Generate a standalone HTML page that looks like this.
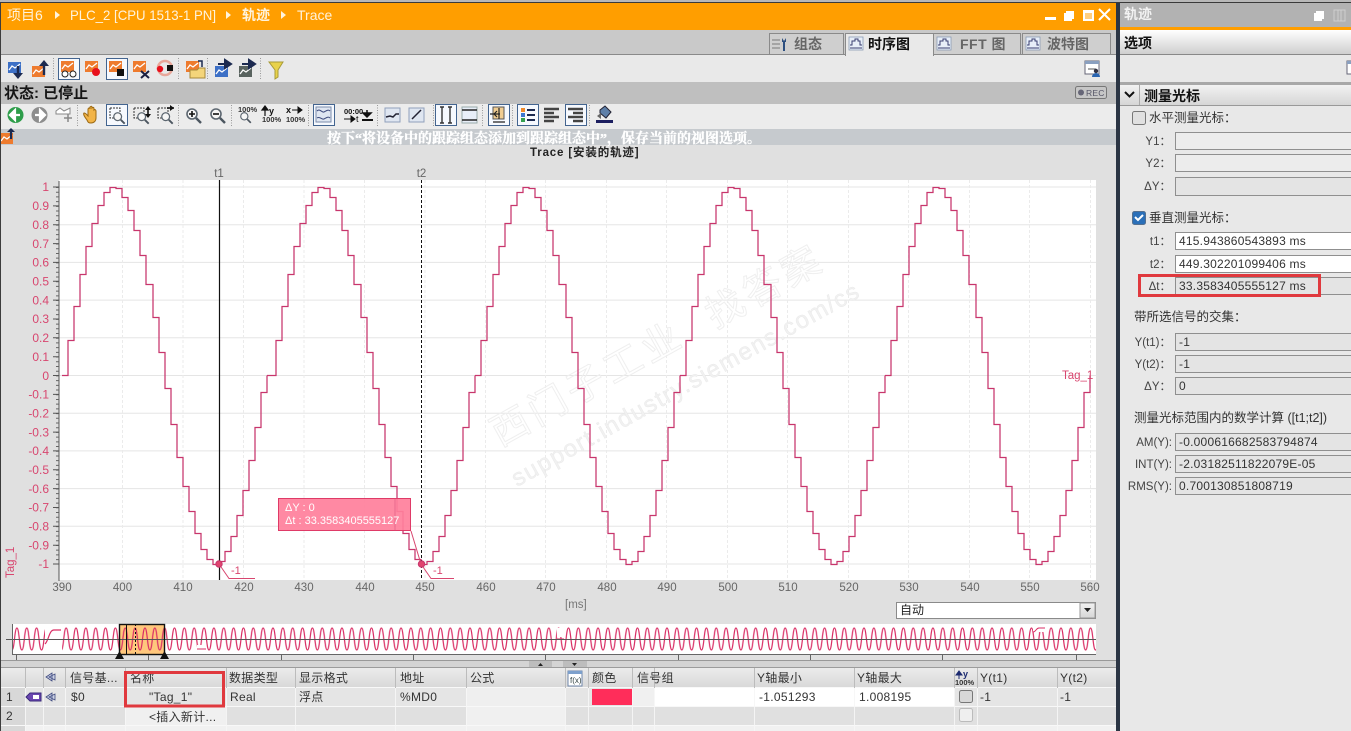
<!DOCTYPE html>
<html><head><meta charset="utf-8"><title>Trace</title>
<style>
html,body{margin:0;padding:0;width:1351px;height:731px;overflow:hidden;background:#e8e8e8}
svg{display:block;font-family:"Liberation Sans","Noto Sans CJK SC",sans-serif}
.y text{font-size:12px;fill:#d8466f;text-anchor:end}
.x text{font-size:11.5px;fill:#666;text-anchor:middle}
.tb text{font-size:12px;fill:#333;letter-spacing:.3px}
.f{fill:#e4e4e4;stroke:#8f8f8f}
.w{fill:#fff;stroke:#8f8f8f}
.lb{font-size:11.5px;fill:#444;text-anchor:end}
.v{font-size:12px;fill:#333;letter-spacing:.22px}
.cn{font-size:12.5px;fill:#333}
.sep{stroke:#9a9a9a;stroke-dasharray:1 1.5}
.sel{fill:#f6f9fe;stroke:#43648f}
</style></head><body>
<svg width="1351" height="731" viewBox="0 0 1351 731" xmlns="http://www.w3.org/2000/svg">
<defs>
<linearGradient id="g1" x1="0" y1="0" x2="0" y2="1"><stop offset="0" stop-color="#fff"/><stop offset="1" stop-color="#cfcfcf"/></linearGradient>
<linearGradient id="g2" x1="0" y1="0" x2="0" y2="1"><stop offset="0" stop-color="#f2f2f2"/><stop offset="1" stop-color="#d6d6d6"/></linearGradient>
<linearGradient id="g3" x1="0" y1="0" x2="0" y2="1"><stop offset="0" stop-color="#ececec"/><stop offset="1" stop-color="#d8d8d8"/></linearGradient>
<path id="w" fill="none" stroke="#c8356c" stroke-width="1.25" d="M0 0H6V-35H12V-69H18V-101H24V-129H30V-152H36V-170H42V-183H48V-188H54V-187H60V-178H66V-165H72V-145H78V-120H84V-91H91V-58H97V-23H103V13H109V49H115V82H121V111H127V136H133V158H139V174H145V184H151V189H157V186H163V176H169V161H175V140H181V115H187V85H193V52H199V17H205V0"/>
<g id="or"><rect width="13" height="11" fill="#ee7b2e"/><path d="M1 8L4 4L7 6L12 2" fill="none" stroke="#fff" stroke-width="1.3"/></g>
<g id="bl"><rect width="13" height="11" fill="#3d70c6"/><path d="M1 8L4 4L7 6L12 2" fill="none" stroke="#fff" stroke-width="1.3"/></g>
<g id="gy"><rect width="13" height="11" fill="#59635f"/><path d="M1 8L4 4L7 6L12 2" fill="none" stroke="#fff" stroke-width="1.3"/></g>
<g id="mag"><circle cx="6" cy="6" r="5" fill="#f6f6f6" stroke="#5c6670" stroke-width="1.6"/><path d="M10 10L15 15" stroke="#4c5660" stroke-width="2.4"/></g>
<g id="tr"><rect width="14" height="13" fill="#e7eef8" stroke="#8a9bb4" stroke-width=".8"/><path d="M1 8H3V4H6V2H9V4H11V8H13M1 11H13" fill="none" stroke="#3a3f70" stroke-width="1"/></g>
<pattern id="ov" patternUnits="userSpaceOnUse" x="12" y="624" width="9.85" height="30"><path d="M0 26C2.5 26 2.5 4 4.9 4S7.3 26 9.85 26" fill="none" stroke="#d92d64" stroke-width="1.2"/></pattern>
</defs>

<rect width="1351" height="731" fill="#e8e8e8"/>
<rect width="1351" height="2" fill="#b8b8b8"/><rect y="2" width="1351" height="1" fill="#3a3a3a"/>
<rect x="1" y="3" width="1115" height="27" fill="#ff9e00"/>
<rect x="1" y="30" width="1115" height="24" fill="#c9c9c9"/><rect x="1" y="54" width="1115" height="1" fill="#8a8a8a"/>
<rect x="1" y="55" width="1115" height="27" fill="#e9e9e9"/>
<rect x="1" y="82" width="1115" height="22" fill="#bfbfbf"/>
<rect x="1" y="104" width="1115" height="25" fill="#ececec"/>
<rect x="1" y="129" width="1115" height="16" fill="#c6cace"/>
<rect x="1" y="145" width="1115" height="516" fill="#e0e0e0"/>

<!-- title bar -->
<g fill="#fff3dc" font-size="14">
<text x="7" y="20">项目6</text>
<text x="70" y="20" textLength="146" lengthAdjust="spacingAndGlyphs">PLC_2 [CPU 1513-1 PN]</text>
<text x="242" y="20" font-weight="bold">轨迹</text>
<text x="297" y="20">Trace</text>
<path d="M55 11l5 4-5 4zM226 11l5 4-5 4zM281 11l5 4-5 4z"/>
</g>
<g fill="#fff">
<rect x="1045" y="17" width="11" height="3"/>
<path d="M1066 11h8v8h-2v2h-8v-8h2z"/>
<rect x="1083" y="10" width="11" height="11"/><rect x="1085" y="13" width="7" height="6" fill="#ffcf80"/>
<path d="M1099 9l11 11M1110 9l-11 11" stroke="#fff" stroke-width="2"/>
</g>

<!-- tabs -->
<g stroke="#8a8a8a" fill="#cfcfcf">
<rect x="769.5" y="33.5" width="74" height="21"/>
<rect x="933.5" y="33.5" width="87" height="21"/>
<rect x="1022.5" y="33.5" width="88" height="21"/>
</g>
<rect x="845.5" y="33.5" width="88" height="22" fill="#e9e9e9" stroke="#8a8a8a"/>
<rect x="846" y="54" width="87" height="2" fill="#e9e9e9"/>
<path d="M772 40h8M772 44h8M772 48h8" stroke="#8a8a8a" stroke-width="1.3"/><path d="M782 38l2 3 2-3v4h-1v9h-2v-9h-1z" fill="#2d4f80"/>
<use href="#tr" x="849" y="37"/><use href="#tr" x="937" y="37"/><use href="#tr" x="1026" y="37"/>
<g font-size="14" font-weight="bold" fill="#666">
<text x="794" y="49">组态</text>
<text x="960" y="49" letter-spacing=".5">FFT 图</text>
<text x="1047" y="49">波特图</text>
<text x="868" y="49" fill="#111">时序图</text>
</g>

<!-- toolbar 1 -->
<rect class="sel" x="58.5" y="58.5" width="21" height="21"/>
<rect class="sel" x="106.5" y="58.5" width="21" height="21"/>
<g class="sep"><path d="M53.5 58v22M178.5 58v22M207.5 58v22M260.5 58v22"/></g>
<use href="#bl" x="8" y="62"/><path d="M18 66v11" stroke="#1c2a50" stroke-width="2.4"/><path d="M13 73h10l-5 6z" fill="#1c2a50"/>
<use href="#or" x="32" y="66"/><path d="M44 63v12" stroke="#1c2a50" stroke-width="2.4"/><path d="M39 66h10l-5-6z" fill="#1c2a50"/>
<use href="#or" x="61" y="61"/><circle cx="65" cy="74" r="3" fill="#fff" stroke="#222"/><circle cx="73" cy="74" r="3" fill="#fff" stroke="#222"/>
<use href="#or" x="85" y="61"/><circle cx="96" cy="72" r="4" fill="#e8101c"/>
<use href="#or" x="109" y="61"/><rect x="117" y="69" width="7" height="7" fill="#111"/>
<use href="#or" x="133" y="61"/><path d="M141 71l8 7M149 71l-8 7" stroke="#1a1f40" stroke-width="2"/>
<circle cx="165" cy="68" r="7" fill="none" stroke="#e8a79a" stroke-width="2.5"/><circle cx="160" cy="69" r="3.2" fill="#e8101c"/><rect x="167" y="65" width="6" height="6" fill="#111"/>
<use href="#or" x="186" y="61"/><path d="M190 70h7l2-2h6v10h-15z" fill="#f4d57a" stroke="#a8893a"/><path d="M198 61h4v6" fill="none" stroke="#1c2a50" stroke-width="1.5"/>
<use href="#bl" x="215" y="66"/><path d="M218 64h10M225 60l6 4-6 4z" stroke="#1c2a50" stroke-width="2" fill="#1c2a50"/>
<use href="#gy" x="239" y="66"/><path d="M242 64h10M249 60l6 4-6 4z" stroke="#1c2a50" stroke-width="2" fill="#1c2a50"/>
<path d="M269 62h14l-5 8v7l-3 2v-9z" fill="#e8d24a" stroke="#a89b38"/>
<g transform="translate(1085,61)"><rect width="14" height="13" fill="#fff" stroke="#667"/><rect x="0" y="0" width="14" height="3" fill="#8aa0c0"/><path d="M3 8h8" stroke="#555"/><circle cx="11" cy="10" r="2.2" fill="#334"/><path d="M7 16a4 4 0 0 1 8 0z" fill="#2a64b0"/></g>

<!-- status bar -->
<text x="4" y="98" font-size="15" font-weight="bold" fill="#151515">状态: 已停止</text>
<rect x="1075.5" y="86.5" width="31" height="12" rx="2" fill="#c6c6c6" stroke="#777"/><circle cx="1081" cy="92.5" r="3" fill="#667"/><text x="1086" y="96" font-size="8.5" fill="#556" letter-spacing=".2">REC</text>

<!-- toolbar 2 -->
<rect class="sel" x="106.5" y="104.5" width="21" height="21"/>
<rect class="sel" x="313.5" y="104.5" width="21" height="21"/>
<rect class="sel" x="435.5" y="104.5" width="21" height="21"/>
<rect class="sel" x="488.5" y="104.5" width="21" height="21"/>
<rect class="sel" x="517.5" y="104.5" width="21" height="21"/>
<rect class="sel" x="565.5" y="104.5" width="21" height="21"/>
<g class="sep"><path d="M77.5 105v22M178.5 105v22M231.5 105v22M308.5 105v22M377.5 105v22M433.5 105v22M482.5 105v22M512.5 105v22M589.5 105v22"/></g>
<circle cx="15.5" cy="115" r="8" fill="#2e9d4a"/><path d="M20 115h-6M15 110l-5 5 5 5z" stroke="#fff" stroke-width="2.2" fill="#fff"/>
<circle cx="39.5" cy="115" r="8" fill="#8d8d8d"/><path d="M35 115h6M40 110l5 5-5 5z" stroke="#fff" stroke-width="2.2" fill="#fff"/>
<path d="M56 111l4-3 4 3 6-3v6H56z" fill="#fff" stroke="#888"/><path d="M68 114v8M64 118h8" stroke="#888" stroke-width="1.5"/>
<path d="M87 120c-3-4-4-6-3-7 2 0 3 2 4 3v-7c1-2 2-1 2 0v-2c1-1 2-1 2 0v1c1-1 2-1 2 1v1c1-1 2 0 2 1v7c0 3-2 5-5 5s-3-1-4-3z" fill="#f2b447" stroke="#9c6a14"/>
<path d="M110 108h10v8M110 108v10h5" fill="none" stroke="#333" stroke-dasharray="2 1"/><use href="#mag" transform="translate(113,112) scale(.78)"/>
<path d="M134 108h10v9M134 108v10h5" fill="none" stroke="#333" stroke-dasharray="2 1"/><use href="#mag" transform="translate(137,112) scale(.78)"/><path d="M148 107v10" stroke="#111" stroke-width="1.6"/><path d="M145 110l3-4 3 4zM145 114l3 4 3-4z" fill="#111"/>
<path d="M158 108h10v9M158 108v10h5" fill="none" stroke="#333" stroke-dasharray="2 1"/><use href="#mag" transform="translate(161,112) scale(.78)"/><path d="M167 108h7" stroke="#111" stroke-width="1.6"/><path d="M170 105l4 3-4 3z" fill="#111"/>
<use href="#mag" x="186" y="108"/><path d="M189 114h6M192 111v6" stroke="#111" stroke-width="1.6"/>
<use href="#mag" x="210" y="108"/><path d="M213 114h6" stroke="#111" stroke-width="1.6"/>
<text x="238" y="112" font-size="7.5" font-weight="bold" fill="#333">100%</text><use href="#mag" transform="translate(240,112) scale(.72)"/>
<path d="M265 107v9M262 110l3-4 3 4z" fill="#111" stroke="#111" stroke-width="1.2"/><text x="269" y="114" font-size="9" font-weight="bold" fill="#111">y</text><text x="262" y="122" font-size="7.5" font-weight="bold" fill="#333">100%</text>
<text x="286" y="113" font-size="9" font-weight="bold" fill="#111">x</text><path d="M292 110h9M298 107l4 3-4 3z" fill="#111" stroke="#111"/><text x="286" y="122" font-size="7.5" font-weight="bold" fill="#333">100%</text>
<rect x="316" y="107" width="15" height="15" fill="#dfe6f1" stroke="#7b8cab"/><path d="M317 111c3-3 5 2 7 1s4-3 6-1M317 118c3-2 5 2 7 1s4-3 6-1" fill="none" stroke="#3d4a7c"/>
<text x="344" y="114" font-size="7.5" font-weight="bold" fill="#111">00:00</text><path d="M344 119h9M351 116l4 3-4 3z" fill="#111" stroke="#111"/><text x="356" y="122" font-size="9" fill="#111">t</text>
<path d="M367 110v5M363 113l4 4 4-4z" fill="#111" stroke="#111" stroke-width="1.5"/><path d="M362 120h11" stroke="#111" stroke-width="2"/>
<rect x="385" y="108" width="15" height="14" fill="#dfe6f1" stroke="#90a0bb"/><path d="M386 117l4-1 3 1 3-3 3 0" fill="none" stroke="#223" stroke-width="1.5"/>
<rect x="409" y="108" width="15" height="14" fill="#dfe6f1" stroke="#90a0bb"/><path d="M412 119l9-9" stroke="#223" stroke-width="1.5"/>
<path d="M440 107h4M442 107v16M440 123h4M448 107h4M450 107v16M448 123h4" stroke="#333" fill="none" stroke-width="1.4"/>
<rect x="462" y="107" width="15" height="16" fill="#e8eef8" stroke="#9aa"/><path d="M462 110h15M462 120h15" stroke="#222" stroke-width="1.5"/>
<rect x="493" y="107" width="11" height="12" fill="#f1cd91" stroke="#555"/><path d="M490 114h10M497 111l-3 3 3 3M499 108v11M493 122h12" stroke="#222" stroke-width="1.2" fill="none"/>
<g><rect x="521" y="108" width="4" height="4" fill="#ef8a2b"/><rect x="521" y="113" width="4" height="4" fill="#3d78d0"/><rect x="521" y="118" width="4" height="4" fill="#35a050"/><path d="M527 110h8M527 115h8M527 120h8" stroke="#1c2a50" stroke-width="2"/></g>
<path d="M544 109h15M544 113h10M544 117h15M544 121h10" stroke="#444" stroke-width="2.4"/>
<path d="M568 109h15M573 113h10M568 117h15M573 121h10" stroke="#444" stroke-width="2.4"/>
<path d="M600 110l5-4 6 6-5 6-6-5z" fill="#5e7fa8" stroke="#223"/><path d="M597 116l4-3v6z" fill="#666"/><rect x="596" y="120" width="17" height="3" fill="#1c1f60"/>

<!-- message bar -->
<use href="#or" x="0" y="133"/><path d="M11 129v10" stroke="#1c2a50" stroke-width="2.2"/><path d="M7 132h8l-4-4z" fill="#1c2a50"/>
<text x="327" y="143" font-size="14" font-weight="bold" fill="#fff" stroke="#fff" stroke-width=".35" style="font-family:'Liberation Serif','Noto Serif CJK SC',serif">按下“将设备中的跟踪组态添加到跟踪组态中”，保存当前的视图选项。</text>
<text x="530" y="156" font-size="11.5" font-weight="bold" fill="#222" letter-spacing=".85">Trace [安装的轨迹]</text>

<!-- chart -->
<rect x="59" y="180" width="1037" height="400" fill="#fff"/>
<path d="M59 187H1096M59 224.7H1096M59 262.4H1096M59 300.1H1096M59 337.8H1096M59 375.5H1096M59 413.2H1096M59 450.9H1096M59 488.6H1096M59 526.3H1096M59 564H1096" stroke="#e5e5e5" fill="none"/>
<path d="M122.5 180V580M183 180V580M243.5 180V580M304 180V580M364.5 180V580M425 180V580M485.5 180V580M545.5 180V580M606.5 180V580M666.5 180V580M727.5 180V580M787.5 180V580M848.5 180V580M908.5 180V580M969.5 180V580M1029.5 180V580M1090.5 180V580" stroke="#ebebeb" stroke-dasharray="3 2" fill="none"/>

<g fill="none" stroke="#efefef" stroke-width="1">
<text transform="translate(500,447) rotate(-29)" font-size="38" letter-spacing="5">西门子工业</text>
<text transform="translate(715,329) rotate(-29)" font-size="38" letter-spacing="5">找答案</text>
</g>
<text transform="translate(517,487) rotate(-29)" font-size="24" fill="#f1f1f1" stroke="#e9e9e9" stroke-width=".4" textLength="393">support.industry.siemens.com/cs</text>

<use href="#w" x="62" y="375.5"/><path d="M267 375.5H270" stroke="#c8356c" stroke-width="1.25"/>
<use href="#w" x="270" y="375.5"/><use href="#w" x="475" y="375.5"/><use href="#w" x="680" y="375.5"/><use href="#w" x="885" y="375.5"/>

<path d="M59 181V581" stroke="#555" stroke-width="1"/>
<path d="M57.5 187V564" stroke="#666" stroke-width="3" stroke-dasharray="1 3.71"/>
<path d="M53 187h6M53 205.9h6M53 224.7h6M53 243.6h6M53 262.4h6M53 281.3h6M53 300.1h6M53 319h6M53 337.8h6M53 356.7h6M53 375.5h6M53 394.4h6M53 413.2h6M53 432.1h6M53 450.9h6M53 469.8h6M53 488.6h6M53 507.5h6M53 526.3h6M53 545.2h6M53 564h6" stroke="#555"/>
<g class="y">
<text x="49" y="191">1</text><text x="49" y="210">0.9</text><text x="49" y="229">0.8</text><text x="49" y="248">0.7</text><text x="49" y="266.5">0.6</text><text x="49" y="285.5">0.5</text><text x="49" y="304.5">0.4</text><text x="49" y="323">0.3</text><text x="49" y="342">0.2</text><text x="49" y="361">0.1</text><text x="49" y="380">0</text><text x="49" y="398.5">-0.1</text><text x="49" y="417.5">-0.2</text><text x="49" y="436.5">-0.3</text><text x="49" y="455">-0.4</text><text x="49" y="474">-0.5</text><text x="49" y="493">-0.6</text><text x="49" y="511.5">-0.7</text><text x="49" y="530.5">-0.8</text><text x="49" y="549.5">-0.9</text><text x="49" y="568">-1</text>
</g>
<text transform="translate(14,578) rotate(-90)" font-size="11.5" fill="#d8466f">Tag_1</text>
<text x="1062" y="379" font-size="11.5" fill="#d8466f">Tag_1</text>
<g class="x">
<text x="62" y="591">390</text><text x="122.5" y="591">400</text><text x="183" y="591">410</text><text x="244" y="591">420</text><text x="304" y="591">430</text><text x="365" y="591">440</text><text x="425" y="591">450</text><text x="486" y="591">460</text><text x="546" y="591">470</text><text x="607" y="591">480</text><text x="667" y="591">490</text><text x="728" y="591">500</text><text x="788" y="591">510</text><text x="849" y="591">520</text><text x="909" y="591">530</text><text x="970" y="591">540</text><text x="1030" y="591">550</text><text x="1090" y="591">560</text>
</g>
<text x="565" y="608" font-size="11.5" fill="#777">[ms]</text>

<path d="M219.5 180V580" stroke="#111" stroke-width="1.2"/>
<path d="M421.5 180V580" stroke="#111" stroke-dasharray="3 2"/>
<text x="219" y="177" font-size="11.5" fill="#666" text-anchor="middle">t1</text>
<text x="421.5" y="177" font-size="11.5" fill="#666" text-anchor="middle">t2</text>
<path d="M219 564L229 578.5H255M421 564L431 578.5H454M411 531L421 564" fill="none" stroke="#d8466f"/>
<circle cx="219" cy="564" r="3.2" fill="#e0456f" stroke="#c8356c"/><circle cx="421.5" cy="564" r="3.2" fill="#e0456f" stroke="#c8356c"/>
<text x="231" y="574" font-size="11" fill="#d8466f">-1</text><text x="433" y="574" font-size="11" fill="#d8466f">-1</text>
<rect x="278.5" y="498.5" width="132" height="32" fill="#ff7f9b" fill-opacity=".92" stroke="#df3a67"/>
<path d="M395 498V531" stroke="#d24a75" stroke-opacity=".5"/>
<text x="285" y="511" font-size="11" fill="#fff">ΔY : 0</text><text x="285" y="524" font-size="11" fill="#fff">Δt : 33.3583405555127</text>

<!-- combo -->
<rect x="896.5" y="602.5" width="199" height="16" fill="#fff" stroke="#8a8a8a"/>
<rect x="1080" y="603" width="15" height="15" fill="url(#g2)" stroke="#999"/><path d="M1084 608h7l-3.5 4z" fill="#222"/>
<text x="900" y="614" font-size="12" fill="#222">自动</text>

<!-- overview -->
<rect x="12" y="624" width="1084" height="30" fill="#fff"/>
<rect x="119" y="624" width="46" height="30" fill="#ffc77c"/>
<rect x="12" y="625" width="1084" height="27" fill="url(#ov)"/>
<rect x="45" y="626" width="17" height="26" fill="#fff"/><path d="M45 644c4-4 4-14 9-14h7" fill="none" stroke="#d92d64" stroke-width="1.2"/>
<rect x="197" y="645" width="9" height="6" fill="#fff"/><path d="M197 649h9" stroke="#d92d64"/>
<rect x="557" y="628" width="7" height="9" fill="#fff"/><path d="M557 639h7" stroke="#d92d64"/>
<rect x="1033" y="626" width="13" height="6" fill="#fff"/><path d="M1033 632c3 0 3-4 6-4h6" fill="none" stroke="#d92d64"/>
<path d="M6 639.5H1096" stroke="#555"/>
<path d="M12.5 624V654.5H1096" fill="none" stroke="#666"/>
<rect x="119.5" y="624.5" width="45" height="30" fill="none" stroke="#111" stroke-width="1.4"/>
<path d="M126.5 624V655" stroke="#111"/><path d="M135.5 624V655" stroke="#111" stroke-dasharray="2 2"/>
<path d="M115 659l4.5-8 4.5 8zM160 659l4.5-8 4.5 8z" fill="#111"/>
<path d="M16.5 655v5M148.5 655v5M281.5 655v5M413.5 655v5M545.5 655v5M678.5 655v5M810.5 655v5M942.5 655v5M1076.5 655v5" stroke="#666"/>
<rect x="1" y="660" width="1115" height="7" fill="#d4d4d4"/><rect x="1" y="660" width="1115" height="1" fill="#999"/>
<rect x="529" y="661" width="23" height="6" fill="#bdbdbd"/><path d="M538 666h5l-2.5-3z" fill="#222"/>
<rect x="563" y="661" width="24" height="6" fill="#bdbdbd"/><path d="M572 663h5l-2.5 3z" fill="#222"/>

<!-- table -->
<rect x="1" y="667" width="1115" height="64" fill="#e2e2e2"/>
<rect x="1" y="667" width="1115" height="1" fill="#9c9c9c"/>
<rect x="1" y="668" width="1115" height="20" fill="url(#g3)"/>
<rect x="1" y="688" width="24" height="43" fill="#d8d8d8"/>
<rect x="25" y="688" width="1091" height="18" fill="#e5e5e5"/>
<rect x="466" y="688" width="99" height="18" fill="#efefef"/>
<rect x="632" y="688" width="22" height="18" fill="#f0f0f0"/>
<rect x="654" y="688" width="300" height="18" fill="#fff"/>
<rect x="25" y="707" width="1091" height="18" fill="#e0e0e0"/>
<rect x="125" y="707" width="101" height="18" fill="#f0f0f0"/>
<rect x="466" y="707" width="99" height="18" fill="#f0f0f0"/>
<rect x="25" y="726" width="1091" height="5" fill="#f1f1f1"/>
<path d="M1 687.5H1116M1 706.5H1116M1 725.5H1116" stroke="#f8f8f8"/>
<path d="M25 668V731M43 668V731M65 668V731M125 668V731M226 668V731M295 668V731M395 668V731M466 668V731M565 668V731M588 668V731M632 668V731M654 668V731M754 668V731M854 668V731M954 668V731M977 668V731M1057 668V731" stroke="#f7f7f7" opacity=".9" transform="translate(.5 0)"/>
<path d="M25 668V688M43 668V688M65 668V688M125 668V688M226 668V688M295 668V688M395 668V688M466 668V688M565 668V688M588 668V688M632 668V688M654 668V688M754 668V688M854 668V688M954 668V688M977 668V688M1057 668V688" stroke="#bcbcbc" transform="translate(.5 0)"/>

<g class="tb">
<text x="70" y="682">信号基...</text><text x="130" y="682">名称</text><text x="229" y="682">数据类型</text><text x="299" y="682">显示格式</text><text x="400" y="682">地址</text><text x="470" y="682">公式</text><text x="592" y="682">颜色</text><text x="637" y="682">信号组</text>
<text x="757" y="682" fill="#555">Y轴最小</text><text x="857" y="682" fill="#555">Y轴最大</text><text x="980" y="682" fill="#555">Y(t1)</text><text x="1060" y="682" fill="#555">Y(t2)</text>
<text x="6" y="701" fill="#888">1</text><text x="6" y="720" fill="#888">2</text>
<text x="71" y="701">$0</text><text x="149" y="701">"Tag_1"</text><text x="230" y="701">Real</text><text x="299" y="701">浮点</text><text x="400" y="701">%MD0</text>
<text x="149" y="721">&lt;插入新计...</text>
<text x="759" y="701">-1.051293</text><text x="859" y="701">1.008195</text><text x="980" y="701">-1</text><text x="1060" y="701">-1</text>
</g>
<path d="M46 677l6-4v8zM49 677l6-3v6z" fill="#cdd3e6" stroke="#3f4a80" stroke-width=".8"/><path d="M46 697l6-4v8zM49 697l6-3v6z" fill="#cdd3e6" stroke="#3f4a80" stroke-width=".8"/>
<path d="M26 697l4-4h11v8H30z" fill="#6a45b0" stroke="#3b2a7c"/><rect x="33" y="695" width="6" height="4" fill="#fff"/>
<rect x="568" y="671" width="14" height="15" fill="#fff" stroke="#7087aa"/><rect x="568" y="671" width="14" height="3" fill="#7da0cc"/><text x="570" y="683" font-size="8" fill="#344">f(x)</text>
<rect x="592" y="689" width="40" height="16" fill="#ff2d5a"/>
<path d="M959 672v7M956 675l3-4 3 4z" fill="#1c2a70" stroke="#1c2a70"/><text x="963" y="677" font-size="9" font-weight="bold" fill="#1c2a70">y</text><text x="955" y="685" font-size="7.5" font-weight="bold" fill="#333">100%</text>
<rect x="959.5" y="690.5" width="13" height="12" rx="2" fill="#d8d8d8" stroke="#777"/>
<rect x="959.5" y="708.5" width="13" height="13" rx="2" fill="#efefef" stroke="#bbb"/>
<rect x="125.5" y="672.5" width="98" height="33.5" fill="none" stroke="#e0393e" stroke-width="3"/>

<!-- divider and left edge -->
<rect y="3" width="1" height="728" fill="#3c3c3c"/>
<rect x="1116" y="3" width="4" height="728" fill="#2b3544"/>

<!-- right panel -->
<rect x="1120" y="3" width="231" height="24" fill="#b2b2b2"/>
<rect x="1120" y="27" width="231" height="3" fill="#ff9e00"/>
<rect x="1120" y="30" width="231" height="24" fill="url(#g1)"/>
<rect x="1120" y="54" width="231" height="1" fill="#888"/>
<rect x="1120" y="82" width="231" height="3" fill="#a8a8a8"/>
<rect x="1120" y="85" width="231" height="20" fill="url(#g2)"/>
<rect x="1120" y="105" width="231" height="1" fill="#999"/>
<rect x="1139" y="85" width="1" height="20" fill="#aaa"/>
<text x="1124" y="19" font-size="14" font-weight="bold" fill="#f2f2f2">轨迹</text>
<path d="M1316 11h8v8h-2v2h-8v-8h2z" fill="#fff"/><path d="M1334 10h11v11h-11zM1338 10v11M1341 10v11" fill="none" stroke="#cfcfcf"/>
<text x="1124" y="48" font-size="14" font-weight="bold" fill="#111">选项</text>
<rect x="1347" y="61" width="6" height="13" fill="#fff" stroke="#667"/><rect x="1347" y="61" width="6" height="3" fill="#8aa0c0"/>
<path d="M1125 92l4.5 4.5 4.5-4.5" fill="none" stroke="#111" stroke-width="2"/>
<text x="1144" y="101" font-size="14" font-weight="bold" fill="#111">测量光标</text>

<rect x="1132.5" y="111.5" width="13" height="13" rx="2" fill="#e0e0e0" stroke="#777"/>
<text x="1149" y="122" class="cn">水平测量光标：</text>
<rect x="1132.5" y="211.5" width="13" height="13" rx="2" fill="#2a6fb8" stroke="#55708f"/><path d="M1135 217l3 3 5-5" fill="none" stroke="#fff" stroke-width="2"/>
<text x="1149" y="222" class="cn">垂直测量光标：</text>

<text class="lb" x="1171" y="145">Y1：</text><text class="lb" x="1171" y="167">Y2：</text><text class="lb" x="1171" y="190">ΔY：</text>
<rect class="f" x="1175.5" y="132.5" width="190" height="17" style="fill:#ececec"/>
<rect class="f" x="1175.5" y="154.5" width="190" height="17" style="fill:#ececec"/>
<rect class="f" x="1175.5" y="177.5" width="190" height="18"/>

<text class="lb" x="1171" y="245">t1：</text><text class="lb" x="1171" y="268">t2：</text><text class="lb" x="1171" y="290">Δt：</text>
<rect class="w" x="1175.5" y="232.5" width="190" height="17"/>
<rect class="w" x="1175.5" y="255.5" width="190" height="17"/>
<rect class="f" x="1175.5" y="277.5" width="190" height="17"/>
<text class="v" x="1179" y="245">415.943860543893 ms</text>
<text class="v" x="1179" y="268">449.302201099406 ms</text>
<text class="v" x="1179" y="290">33.3583405555127 ms</text>
<rect x="1139.5" y="275.5" width="180" height="20" fill="none" stroke="#e0393e" stroke-width="3"/>

<text x="1134" y="321" class="cn">带所选信号的交集：</text>
<text class="lb" x="1171" y="346">Y(t1)：</text><text class="lb" x="1171" y="368">Y(t2)：</text><text class="lb" x="1171" y="390">ΔY：</text>
<rect class="f" x="1175.5" y="333.5" width="190" height="17"/>
<rect class="f" x="1175.5" y="355.5" width="190" height="17"/>
<rect class="f" x="1175.5" y="377.5" width="190" height="17"/>
<text class="v" x="1179" y="346">-1</text><text class="v" x="1179" y="368">-1</text><text class="v" x="1179" y="390">0</text>

<text x="1134" y="422" class="cn">测量光标范围内的数学计算 ([t1;t2])</text>
<text class="lb" x="1172" y="446">AM(Y):</text><text class="lb" x="1172" y="468">INT(Y):</text><text class="lb" x="1172" y="490">RMS(Y):</text>
<rect class="f" x="1175.5" y="433.5" width="190" height="17"/>
<rect class="f" x="1175.5" y="455.5" width="190" height="17"/>
<rect class="f" x="1175.5" y="477.5" width="190" height="17"/>
<text class="v" x="1179" y="446">-0.000616682583794874</text>
<text class="v" x="1179" y="468">-2.03182511822079E-05</text>
<text class="v" x="1179" y="490">0.700130851808719</text>
</svg>
</body></html>
